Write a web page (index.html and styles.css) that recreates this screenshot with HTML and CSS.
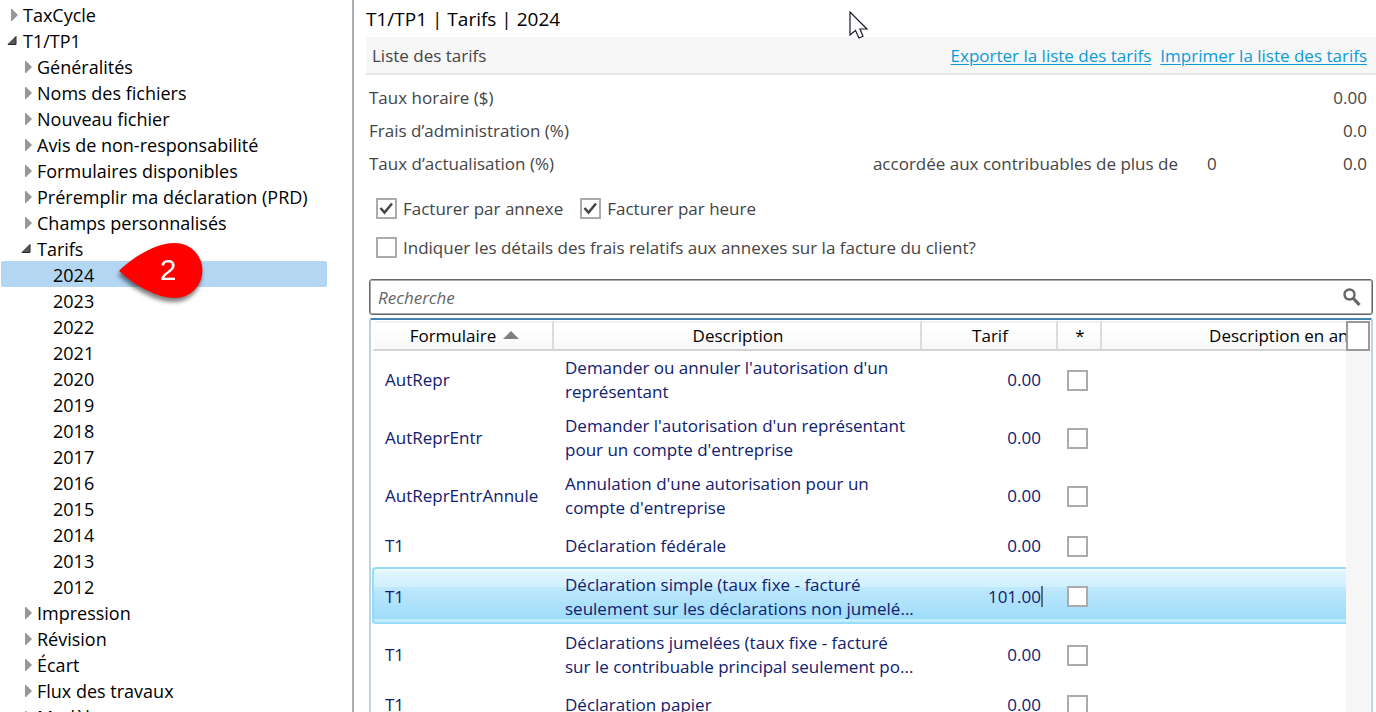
FILE: index.html
```
<!DOCTYPE html>
<html lang="fr">
<head>
<meta charset="utf-8">
<title>T1/TP1 | Tarifs | 2024</title>
<link rel="stylesheet" href="styles.css">
</head>
<body>
<svg class="defs" width="0" height="0" aria-hidden="true">
  <symbol id="closed" viewBox="0 0 10 14"><path d="M2 1 H3 L9 7 L3 13 H2Z" fill="#989898"/></symbol>
  <symbol id="open" viewBox="0 0 10 14"><path d="M9 2.500 V10.500 H1Z" fill="#595959" stroke="#262626"/></symbol>
</svg>
<div class="app">
  <nav class="sidebar" aria-label="Options">
    <ul class="tree">
      <li><button class="node level0"><svg><use href="#closed"/></svg>TaxCycle</button></li>
      <li><button class="node level0"><svg><use href="#open"/></svg>T1/TP1</button>
        <ul>
          <li><button class="node level1"><svg><use href="#closed"/></svg>Généralités</button></li>
          <li><button class="node level1"><svg><use href="#closed"/></svg>Noms des fichiers</button></li>
          <li><button class="node level1"><svg><use href="#closed"/></svg>Nouveau fichier</button></li>
          <li><button class="node level1"><svg><use href="#closed"/></svg>Avis de non-responsabilité</button></li>
          <li><button class="node level1"><svg><use href="#closed"/></svg>Formulaires disponibles</button></li>
          <li><button class="node level1"><svg><use href="#closed"/></svg>Préremplir ma déclaration (PRD)</button></li>
          <li><button class="node level1"><svg><use href="#closed"/></svg>Champs personnalisés</button></li>
          <li><button class="node level1"><svg><use href="#open"/></svg>Tarifs</button>
            <ul>
              <li class="current"><button class="node level2 active">2024</button>
                <span class="callout"><svg viewBox="0 0 86 58"><path d="M1 29 C13 17 36 1 57 1 A27 27 0 0 1 57 56 C36 56 13 40 1 29Z" fill="#f00"/></svg><span class="callout-number">2</span></span></li>
              <li><button class="node level2">2023</button></li>
              <li><button class="node level2">2022</button></li>
              <li><button class="node level2">2021</button></li>
              <li><button class="node level2">2020</button></li>
              <li><button class="node level2">2019</button></li>
              <li><button class="node level2">2018</button></li>
              <li><button class="node level2">2017</button></li>
              <li><button class="node level2">2016</button></li>
              <li><button class="node level2">2015</button></li>
              <li><button class="node level2">2014</button></li>
              <li><button class="node level2">2013</button></li>
              <li><button class="node level2">2012</button></li>
            </ul>
          </li>
          <li><button class="node level1"><svg><use href="#closed"/></svg>Impression</button></li>
          <li><button class="node level1"><svg><use href="#closed"/></svg>Révision</button></li>
          <li><button class="node level1"><svg><use href="#closed"/></svg>Écart</button></li>
          <li><button class="node level1"><svg><use href="#closed"/></svg>Flux des travaux</button></li>
          <li><button class="node level1"><svg><use href="#closed"/></svg>Modèles</button></li>
        </ul>
      </li>
    </ul>
  </nav>

  <main class="content">
    <h1 class="title">T1/TP1 | Tarifs | 2024</h1>
    <header class="section-bar">
      <h2 class="section-title">Liste des tarifs</h2>
      <a href="#">Exporter la liste des tarifs</a>
      <a href="#">Imprimer la liste des tarifs</a>
    </header>

    <form class="settings">
      <div class="field"><label for="hourly">Taux horaire ($)</label><input class="amount" id="hourly" type="text" value="0.00"></div>
      <div class="field"><label for="admin">Frais d’administration (%)</label><input class="amount" id="admin" type="text" value="0.0"></div>
      <div class="field"><label for="discount">Taux d’actualisation (%)</label><label for="age">accordée aux contribuables de plus de</label><input class="age" id="age" type="text" value="0"><input class="amount" id="discount" type="text" value="0.0"></div>
      <div class="checks">
        <label class="check"><input class="box" type="checkbox" checked>Facturer par annexe</label>
        <label class="check"><input class="box" type="checkbox" checked>Facturer par heure</label>
      </div>
      <div class="checks">
        <label class="check"><input class="box" type="checkbox">Indiquer les détails des frais relatifs aux annexes sur la facture du client?</label>
      </div>
    </form>

    <div class="search">
      <input type="search" placeholder="Recherche" aria-label="Recherche">
      <svg viewBox="0 0 18 19"><circle cx="6.500" cy="6.500" r="5" fill="none" stroke="#666" stroke-width="2.400"/><path d="M10 10 L16.500 17" stroke="#666" stroke-width="3.200"/></svg>
    </div>

    <div class="grid">
      <div class="grid-view">
        <table>
          <colgroup><col class="c-form"><col class="c-desc"><col class="c-price"><col class="c-star"><col class="c-english"></colgroup>
          <thead>
            <tr><th>Formulaire<svg class="sort" viewBox="0 0 16 8"><path d="M0 8 L8 0 L16 8Z" fill="#808080"/></svg></th><th>Description</th><th>Tarif</th><th>*</th><th>Description en anglais</th></tr>
          </thead>
          <tbody>
            <tr><td>AutRepr</td><td>Demander ou annuler l'autorisation d'un<br>représentant</td><td class="price">0.00</td><td class="star"><input class="box" type="checkbox" aria-label="AutRepr"></td><td></td></tr>
            <tr><td>AutReprEntr</td><td>Demander l'autorisation d'un représentant<br>pour un compte d'entreprise</td><td class="price">0.00</td><td class="star"><input class="box" type="checkbox" aria-label="AutReprEntr"></td><td></td></tr>
            <tr><td>AutReprEntrAnnule</td><td>Annulation d'une autorisation pour un<br>compte d'entreprise</td><td class="price">0.00</td><td class="star"><input class="box" type="checkbox" aria-label="AutReprEntrAnnule"></td><td></td></tr>
            <tr class="single"><td>T1</td><td>Déclaration fédérale</td><td class="price">0.00</td><td class="star"><input class="box" type="checkbox" aria-label="Déclaration fédérale"></td><td></td></tr>
            <tr class="selected"><td>T1</td><td>Déclaration simple (taux fixe - facturé<br>seulement sur les déclarations non jumelé...</td><td class="price"><span class="editing">101.00</span></td><td class="star"><input class="box" type="checkbox" aria-label="Déclaration simple"></td><td></td></tr>
            <tr class="after"><td>T1</td><td>Déclarations jumelées (taux fixe - facturé<br>sur le contribuable principal seulement po...</td><td class="price">0.00</td><td class="star"><input class="box" type="checkbox" aria-label="Déclarations jumelées"></td><td></td></tr>
            <tr class="single"><td>T1</td><td>Déclaration papier</td><td class="price">0.00</td><td class="star"><input class="box" type="checkbox" aria-label="Déclaration papier"></td><td></td></tr>
          </tbody>
        </table>
      </div>
      <div class="scroll-track"><button class="chooser" aria-label="Choisir les colonnes"></button></div>
    </div>
    <svg class="pointer" viewBox="0 0 20 29"><path d="M1 1 V24 L6.500 19.500 L10 27 L14 25.300 L11 18 H18Z" fill="#fff" stroke="#1b1b26" stroke-width="1.200"/></svg>
  </main>
</div>
</body>
</html>
```
FILE: styles.css
```
* { box-sizing: border-box; }

body {
  margin: 0;
  background: #fff;
  color: #444;
  font: 17px/24px "Open Sans", "Noto Sans", sans-serif;
}

button, input { font: inherit; color: inherit; }

.defs { position: absolute; }

.app {
  display: flex;
  height: 100vh;
  overflow: hidden;
}

/* Navigation tree */
.sidebar {
  flex: 0 0 354px;
  padding: 1px 25px 0 1px;
  border-right: 2px solid #adadad;
  overflow: hidden;
}

.tree, .tree ul { list-style: none; margin: 0; padding: 0; }

.node {
  display: flex;
  align-items: center;
  width: 100%;
  height: 26px;
  padding: 2px 0 0;
  border: 0;
  border-radius: 2px;
  background: none;
  color: #000;
  font-size: 18px;
  line-height: 24px;
  white-space: nowrap;
}

.node svg { width: 10px; height: 14px; margin-right: 4px; overflow: visible; }
.level0 { padding-left: 8px; }
.level1 { padding-left: 22px; }
.level2 { padding-left: 52px; }
.node use[href="#open"] { transform: translateX(-2px); }
.active { background: #b3d6f3; }
.current { position: relative; }

.callout {
  position: absolute;
  top: -19px;
  left: 117px;
  width: 86px;
  height: 58px;
  filter: drop-shadow(-1px 4px 2px rgba(0, 0, 0, 0.5));
}

.callout svg { display: block; width: 100%; height: 100%; }

.callout-number {
  position: absolute;
  inset: 0 0 0 14px;
  color: #fff;
  font: 30px/56px "Liberation Sans", sans-serif;
  text-align: center;
}

/* Main panel */
.content {
  position: relative;
  flex: 1;
  min-width: 0;
  display: flex;
  flex-direction: column;
  padding-left: 12px;
}

.title {
  margin: 0;
  padding: 5px 0 4px;
  color: #000;
  font-size: 19px;
  font-weight: 400;
  line-height: 28px;
}

.section-bar {
  display: flex;
  align-items: center;
  gap: 9px;
  height: 38px;
  padding: 2px 9px 0 6px;
  background: #f7f7f7;
  border-bottom: 2px solid #e5e5e5;
  white-space: nowrap;
}

.section-title { flex: 1; margin: 0; font-size: 17px; font-weight: 400; }
.section-bar a { color: #0a9bd8; text-underline-offset: 2px; }

.settings { padding: 6px 9px 12px 3px; }

.field { display: flex; align-items: center; height: 33px; }
.field label:first-child { flex: 1; }

.field input {
  padding: 0;
  border: 0;
  background: none;
  outline: 0;
}

.field .amount { width: 80px; text-align: right; }
.field .age { width: 80px; margin-left: 29px; }

.checks { display: flex; gap: 17px; height: 39px; padding-left: 7px; }
.field + .checks { margin-top: 9px; }
.check { display: flex; align-items: center; gap: 6px; }

.box {
  appearance: none;
  display: block;
  flex: none;
  width: 21px;
  height: 21px;
  margin: 0;
  border: 2px solid #ababab;
  background: #fff;
}

.box:checked {
  background: url("data:image/svg+xml,%3Csvg xmlns='http://www.w3.org/2000/svg' viewBox='0 0 17 17'%3E%3Cpath d='M2.500 8 L6.500 12.500 L14 3.500' fill='none' stroke='%23444' stroke-width='2.500'/%3E%3C/svg%3E");
}

.search {
  display: flex;
  align-items: center;
  height: 36px;
  margin: 0 3px 3px;
  padding: 1px 11px 0 8px;
  border: 1px solid #666;
  border-radius: 3px;
  box-shadow: inset 0 0 0 1px #aaa;
}

.search input {
  flex: 1;
  min-width: 0;
  padding: 0;
  border: 0;
  outline: 0;
  background: none;
  font-size: 17px;
}

.search input::placeholder { color: #666; font-style: italic; }
.search svg { width: 18px; height: 19px; }

/* Fee table */
.grid {
  flex: 1;
  min-height: 0;
  display: flex;
  margin: 0 3px;
  padding: 1px 1px 0;
  border: 2px solid #b9d5e8;
  border-top-color: #4682b0;
  border-bottom: 0;
  border-radius: 3px 3px 0 0;
  overflow: hidden;
}

.grid-view { flex: 1; min-width: 0; overflow: hidden; }
.scroll-track { flex: 0 0 24px; background: #f6f6f6; }

.chooser {
  display: block;
  width: 24px;
  height: 30px;
  padding: 0;
  border: 2px solid #9c979a;
  background: #fff;
}

table {
  width: 1119px;
  table-layout: fixed;
  border-spacing: 0;
}

.c-form { width: 182px; }
.c-desc { width: 368px; }
.c-price { width: 136px; }
.c-star { width: 44px; }
.c-english { width: 389px; }

th {
  height: 30px;
  padding: 2px 0 0 2px;
  border-right: 2px solid #dcdcdc;
  border-bottom: 2px solid #d3d3d3;
  background: linear-gradient(#f2f2f2 2px, #fff 2px, #fff 30%, #f6f7f8);
  color: #000;
  font-weight: 400;
}

th:first-child { border-left: 3px solid #fff; }
.sort { width: 16px; height: 8px; margin: 0 0 3px 7px; }

td {
  height: 58px;
  padding: 0 0 0 11px;
  color: #0f2070;
  white-space: nowrap;
}

td:first-child { padding-left: 13px; }
.price { padding: 0 17px 0 0; text-align: right; }
.star { padding-left: 9px; }
.single td { height: 42px; }

.selected td {
  height: 57px;
  padding-top: 2px;
  border: solid #96dbf8;
  border-width: 2px 0;
  background: linear-gradient(#f0faff 2px, #e0f5ff 2px, #d0f0fe 18px, #bfe8fc 18px, #9edcfa 50px, #c5ecfd 50px);
}

.selected td:first-child {
  padding-left: 11px;
  border-left-width: 2px;
  border-radius: 4px 0 0 4px;
}

.after td { height: 60px; padding-top: 2px; }

.editing { position: relative; }

.editing::after {
  content: "";
  position: absolute;
  top: 1px;
  left: 100%;
  width: 2px;
  height: 21px;
  background: #566f7c;
}

.pointer {
  position: absolute;
  top: 11px;
  left: 495px;
  width: 20px;
  height: 29px;
}
```
